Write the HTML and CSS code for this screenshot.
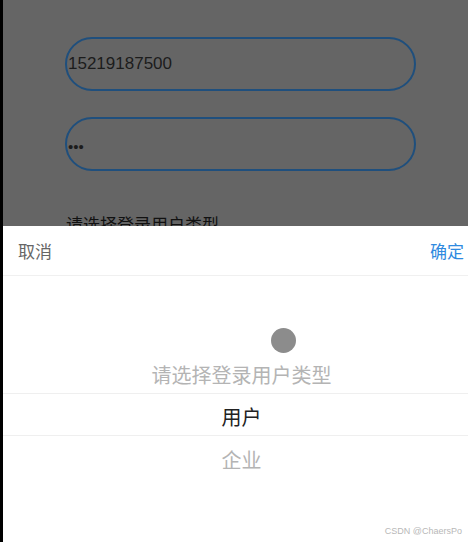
FILE: index.html
```html
<!DOCTYPE html>
<html lang="zh-CN">
<head>
  <meta charset="UTF-8" />
  <meta name="viewport" content="width=device-width, initial-scale=1.0" />
  <title>登录</title>
  <link rel="stylesheet" href="styles.css">
</head>
<body>
  <div class="screen">
    <!-- Login form, dimmed behind the picker -->
    <div class="login">
      <div class="field">15219187500</div>
      <div class="field password">•••</div>
      <div class="type-label">请选择登录用户类型</div>
    </div>

    <!-- Bottom sheet picker -->
    <div class="sheet">
      <div class="sheet-header">
        <span class="btn-cancel">取消</span>
        <span class="btn-ok">确定</span>
      </div>
      <div class="picker">
        <span class="touch-dot"></span>
        <div class="picker-item faded">请选择登录用户类型</div>
        <div class="picker-item selected">用户</div>
        <div class="picker-item faded">企业</div>
      </div>
    </div>

    <span class="watermark">CSDN @ChaersPo</span>
  </div>
</body>
</html>
```

FILE: styles.css
```css
* {
  box-sizing: border-box;
}
body {
  margin: 0;
  background: #fff;
  font-family: "Liberation Sans", Arial, "Noto Sans CJK SC", sans-serif;
  color: #222;
}
.screen {
  position: relative;
  height: 542px;
  border-left: 3px solid #000;
  display: flex;
  flex-direction: column;
  overflow: hidden;
}
.login {
  height: 226px;
  flex: none;
  background: #656565;
  padding: 37px 0 0 62px;
  display: flex;
  flex-direction: column;
  gap: 26px;
  overflow: hidden;
}
.field {
  flex: none;
  width: 351px;
  height: 54px;
  border: 2px solid #1f4f7d;
  border-radius: 27px;
  display: flex;
  align-items: center;
  padding-left: 1px;
  font-size: 17px;
  color: #1c1c1c;
}
.field.password {
  font-size: 15px;
  padding-top: 4px;
}
.type-label {
  flex: none;
  margin-top: 14px;
  padding-left: 1px;
  font-size: 17px;
  color: #111;
}
.sheet {
  flex: 1;
  background: #fff;
}
.sheet-header {
  height: 50px;
  display: flex;
  justify-content: space-between;
  align-items: center;
  padding: 0 4px 0 15px;
  border-bottom: 1px solid #f0f0f0;
  font-size: 17px;
}
.btn-cancel {
  color: #666;
}
.btn-ok {
  color: #2f8ae0;
}
.picker {
  position: relative;
  padding: 75px 0 0 12px;
}
.touch-dot {
  position: absolute;
  left: 268px;
  top: 52px;
  width: 25px;
  height: 25px;
  border-radius: 50%;
  background: #8c8c8c;
}
.picker-item {
  height: 42px;
  display: flex;
  align-items: center;
  justify-content: center;
  font-size: 20px;
  padding-top: 4px;
}
.picker-item.faded {
  color: #b4b4b4;
}
.picker-item.selected {
  color: #222;
  border-top: 1px solid #efefef;
  border-bottom: 1px solid #efefef;
  height: 43px;
  margin-left: -12px;
  padding-left: 12px;
}
.watermark {
  position: absolute;
  right: 6px;
  bottom: 6px;
  font-size: 9px;
  color: #b8b8b8;
}
```
